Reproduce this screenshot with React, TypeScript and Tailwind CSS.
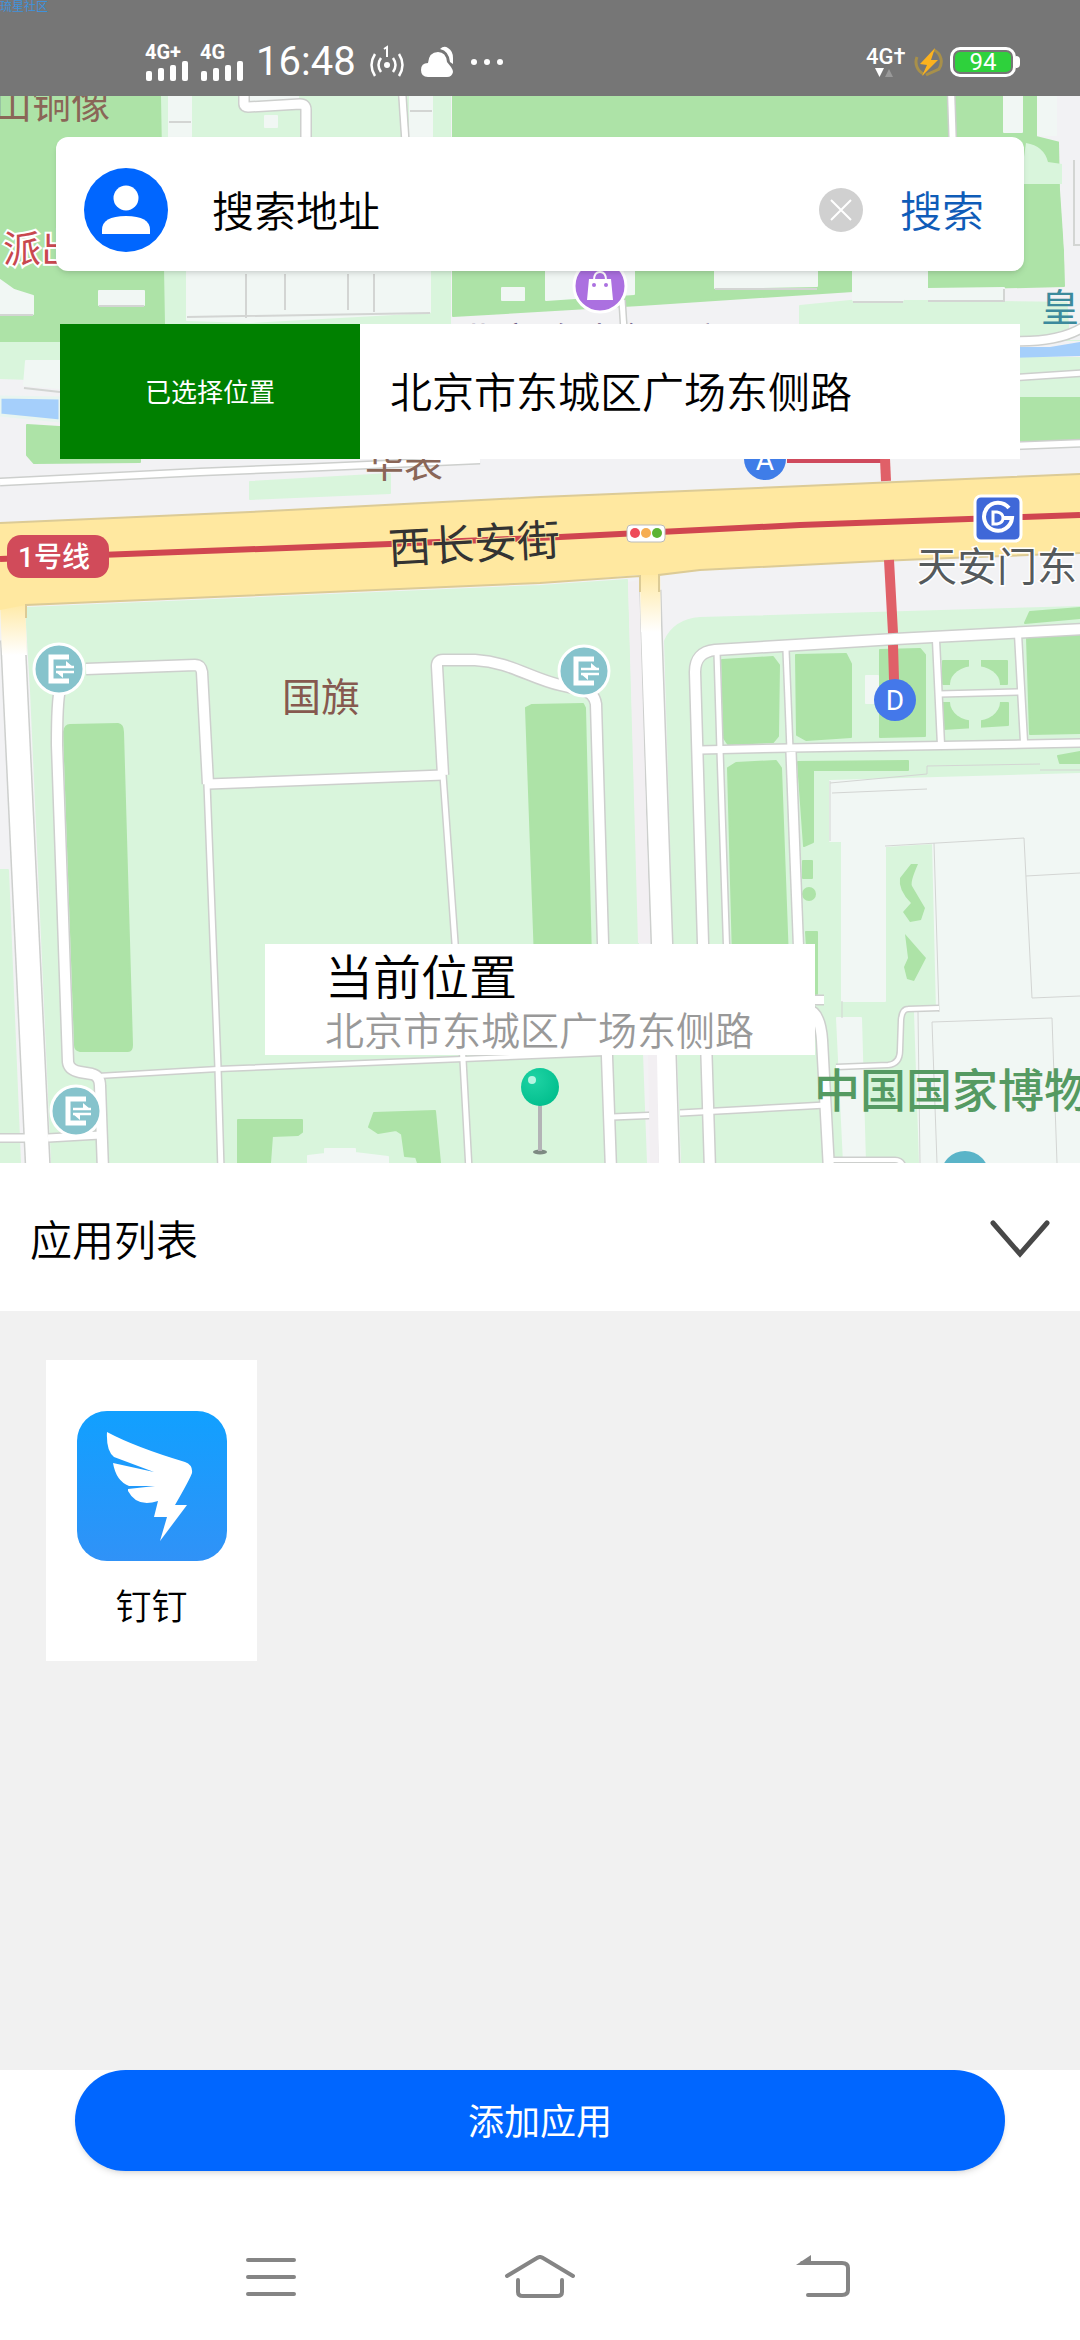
import { useState } from 'react'

const CJK = "font-['Roboto','Noto_Sans_CJK_SC',sans-serif]"

const LAWN = '#d9f5dc'
const GRASS = '#ade3a7'
const BUILDING = '#f1f7f4'
const CASING = '#cdcfcd'

const apps = [{ id: 'dingtalk', name: '钉钉' }]

const roads: { d: string; w: number }[] = [
  { d: 'M244 90V104Q244 107 248 107L300 104Q306 104 306 110V150', w: 9 },
  { d: 'M402 90L406 150', w: 6 },
  { d: 'M951 90L953 150', w: 6 },
  { d: 'M622 300L624 330', w: 5 },
  { d: 'M1010 341Q1060 343 1085 326', w: 8 },
  { d: 'M1010 378L1085 373', w: 5 },
  { d: 'M1010 446L1085 443', w: 6 },
  { d: 'M0 482L200 472L300 468L480 460', w: 6 },
  { d: 'M13 640L38 1170', w: 23 },
  { d: 'M86 669L195 665Q201 665 202 672L208 784', w: 10 },
  { d: 'M207 784L218 1068L221 1170', w: 5 },
  { d: 'M208 784L443 775', w: 9 },
  { d: 'M443 775L437 666Q437 660 443 660L475 660C510 662 530 678 560 685L582 690Q594 692 596 704L603 943L611 1170', w: 10 },
  { d: 'M443 775L455 943L463 1060L469 1170', w: 5 },
  { d: 'M60 690Q57 700 57 745L68 1062Q69 1070 80 1072L92 1074Q100 1076 100 1086L103 1170', w: 10 },
  { d: 'M98 1076L218 1069L463 1059L604 1053', w: 4 },
  { d: 'M-5 1138L26 1138M48 1138L100 1135', w: 7 },
  { d: 'M1085 629L895 639L715 650Q695 652 695 672L703 943L710 1170', w: 10 },
  { d: 'M717 652L720 750L727 960', w: 5 },
  { d: 'M700 750L790 748L1085 743', w: 7 },
  { d: 'M786 650L790 750', w: 5 },
  { d: 'M791 752L799 960', w: 9 },
  { d: 'M936 640L941 745M1018 634L1024 742', w: 6 },
  { d: 'M939 694L1021 692', w: 5 },
  { d: 'M808 1000L824 1000', w: 8 },
  { d: 'M808 1010Q820 1012 822 1040L829 1170', w: 10 },
  { d: 'M939 1008L908 1009Q902 1009 901 1020L900 1050Q900 1064 888 1065L836 1067', w: 4 },
  { d: 'M612 1117L660 1115M680 1113L826 1105', w: 5 },
  { d: 'M832 1160L895 1160Q902 1160 904 1168', w: 4 },
  { d: 'M650 590L651 625L662 943L669 1170', w: 20 },
]

function Blocks({ fill, shapes }: { fill: string; shapes: string[] }) {
  return (
    <g fill={fill} stroke={fill} strokeWidth="2" strokeLinejoin="round">
      {shapes.map((d) => (
        <path key={d} d={d} />
      ))}
    </g>
  )
}

function ExitMarker({ x, y }: { x: number; y: number }) {
  return (
    <g transform={`translate(${x} ${y})`}>
      <circle r="25" fill="#86c3cc" stroke="#fff" strokeWidth="3" />
      <path d="M10 -12H-8V12H10" fill="none" stroke="#fff" strokeWidth="5" />
      <path d="M-3 -2H15M-3 3H15" stroke="#fff" strokeWidth="2.5" />
      <path d="M7 -8L14 -2H7ZM4 9L-3 3H4Z" fill="#fff" />
    </g>
  )
}

function CityMap() {
  return (
    <svg
      viewBox="0 96 1080 1067"
      preserveAspectRatio="xMidYMin slice"
      className="absolute inset-0 h-full w-full"
      aria-hidden="true"
    >
      <defs>
        <linearGradient id="fade" x1="0" y1="0" x2="0" y2="1">
          <stop offset="0" stopColor="#ffe8a0" />
          <stop offset="1" stopColor="#fff" />
        </linearGradient>
        <radialGradient id="pin" cx="0.35" cy="0.3" r="0.8">
          <stop offset="0" stopColor="#1fd3a4" />
          <stop offset="1" stopColor="#00bd8c" />
        </radialGradient>
      </defs>
      <rect y="96" width="1080" height="1067" fill="#f2f2f4" />

      <Blocks
        fill={LAWN}
        shapes={[
          'M160 96H450V324H160Z',
          'M0 343H60V380L0 378Z',
          'M800 306L860 300L1080 303V340H800Z',
          'M1010 358H1080V400H1010Z',
          'M250 482L390 474V493L250 499Z',
          'M0 870L8 870L20 1163H0Z',
          'M26 608L540 586L627 580L638 943L646 1163H52L31 691Z',
          'M665 641Q674 620 700 618L1080 607V1163H682L674 943Z',
        ]}
      />
      <Blocks
        fill={GRASS}
        shapes={[
          'M0 96H160L164 324L62 341L0 341Z',
          'M453 96H1036V137L1060 143L1064 286L853 291L640 305L453 316Z',
          'M27 425L140 432V462L34 463L27 455Z',
          'M1010 398H1080V440H1010Z',
          'M64 732Q65 725 70 725L118 724Q123 725 123 732L132 1045Q132 1051 128 1051H80Q75 1050 75 1045Z',
          'M526 708L532 705L583 704L585 708L591 960H535Z',
          'M238 1120H302V1132L298 1135L272 1136L270 1163H238Z',
          'M374 1113L435 1111L440 1163H418L416 1157L405 1156L402 1134L396 1130L378 1133L369 1127Z',
          'M722 660L773 657L779 665L778 736L773 742L728 744L724 738Z',
          'M796 655L846 654L851 664V737L806 740L797 735Z',
          'M880 650L920 649L925 655V736L880 737Z',
          'M728 768L736 763L776 761L781 768L788 960H733Z',
          'M1027 638L1080 632V733L1030 734Z',
          'M1030 612L1080 608V618L1025 623Z',
          'M1058 756L1080 752V763H1060Z',
          'M798 762L908 761V770H813V842L804 846Z',
          'M803 861H812V878H803Z',
          'M806 932H817V994H810Z',
          'M943 661H1007V684H943Z',
          'M943 703H1008V725L943 729Z',
        ]}
      />
      <circle cx="809" cy="894" r="7" fill={GRASS} />
      <ellipse cx="975" cy="684" rx="25" ry="18" fill={LAWN} />
      <ellipse cx="975" cy="702" rx="25" ry="19" fill={LAWN} />
      <path d="M969 655H981V735H969Z" fill={LAWN} />
      <Blocks
        fill={BUILDING}
        shapes={[
          'M169 96H191V140H169Z',
          'M265 116H277V127H265Z',
          'M246 96H298V101H246Z',
          'M410 96H432V140H410Z',
          'M1004 96H1022V132H1004Z',
          'M1038 96H1056V135H1038Z',
          'M0 280L14 290L33 296V314H0Z',
          'M99 291H144V305H99Z',
          'M187 262H430V312L250 322L187 320Z',
          'M502 288H524V300H502Z',
          'M546 262H634V294L546 300Z',
          'M715 262H817V286L715 288Z',
          'M853 262H903V300H853Z',
          'M905 262H927V299H905Z',
          'M928 289L1004 288V299H928Z',
          'M26 361H60V388L24 385Z',
          'M325 1149H355V1153L388 1157V1163H308V1156L325 1154Z',
          'M866 676H878V703H866Z',
          'M830 781L1080 774V1163H920L915 1012H937L933 843L885 846V1001H842V841H830Z',
          'M837 1018H861L865 1163H844Z',
        ]}
      />
      <path d="M1058 96H1080V340H1070L1060 190Z" fill="#f2f2f4" />
      <path d="M1026 143Q1044 146 1048 162L1062 164V184H1020Z" fill={LAWN} />
      <g stroke="#d3d5d3" strokeWidth="2" fill="none">
        <path d="M169 122H191M410 111H432M246 274V318M374 274V312M285 274V310M348 274V310M1074 160V245H1080" />
        <path d="M187 317L430 313M99 306H144M0 315H33M24 388L60 392M853 302H903M928 301H1004V289M715 289H817" />
        <path d="M830 783L927 774L927 766L1040 764M830 781V841M832 793L927 789M1040 770H1080M885 846L1024 838L1032 998L1080 996M1026 876L1080 873M934 843L939 1012" strokeWidth="1" />
        <path d="M932 1022L1052 1018L1057 1163M932 1022L937 1163M918 1012L920 1163M842 1001V1018" strokeWidth="1" />
      </g>
      <g fill={GRASS}>
        <path d="M911 864H918Q910 882 912 886L925 908L921 920L910 922L903 912L911 903Q898 890 900 878Z" />
        <path d="M905 934L926 958L914 981L907 979L904 967L908 958Z" />
      </g>

      <path d="M0 397L60 398V421L0 415Z" fill="#a5cffb" stroke="#e8f5f0" strokeWidth="3" />
      <path d="M1010 347H1050L1080 342V356L1010 358Z" fill="#a5cffb" />

      <g fill="none" stroke={CASING} strokeLinejoin="round">
        {roads.map(({ d, w }) => (
          <path key={d} d={d} strokeWidth={w + 3} />
        ))}
      </g>
      <g fill="none" stroke="#fff" strokeLinejoin="round">
        {roads.map(({ d, w }) => (
          <path key={d} d={d} strokeWidth={w} />
        ))}
      </g>
      <path d="M648 1055H657L659 1163H650Z" fill="#f2eff2" />
      <path d="M628 582L639 580L650 943H638Z" fill="#f2eff2" />

      <path d="M0 600H25L27 655H2Z" fill="url(#fade)" />
      <path d="M640 570H660L661 632H641Z" fill="url(#fade)" />
      <path
        d="M0 523L250 512L540 497L780 487L1080 474V553L950 558L880 561L700 570L659 575H640L540 583L26 605L0 610Z"
        fill="#ffe8a0"
      />
      <path
        d="M0 523L250 512L540 497L780 487L1080 474M1080 553L950 558L880 561L700 570L659 575V592M640 592V576L540 583L26 605V618"
        fill="none"
        stroke="#dccb96"
        strokeWidth="2"
      />

      <g fill="none" stroke="#e06068">
        <path d="M787 461H885" strokeWidth="4" stroke="#cf4a5c" />
        <path d="M885 459L886 481" strokeWidth="10" />
        <path d="M889 560L893 633M893 645L894 680" strokeWidth="10" />
      </g>
      <path d="M0 559L100 555L390 544L560 537L800 525L1080 515" fill="none" stroke="#d04650" strokeWidth="6" />

      <rect x="7" y="535" width="102" height="43" rx="14" fill="#d14b5a" />
      <rect x="627" y="525" width="38" height="17" rx="4" fill="#fff" stroke="#bbb" />
      <circle cx="635" cy="533" r="5" fill="#ee4a58" />
      <circle cx="646" cy="533" r="5" fill="#f6ad52" />
      <circle cx="657" cy="533" r="5" fill="#5cb433" />

      <circle cx="600" cy="286" r="26" fill="#ab70e0" stroke="#fff" strokeWidth="3" />
      <path d="M589 279H611L613 300H587Z" fill="#fff" />
      <path d="M594 280Q594 272 600 272T606 280" fill="none" stroke="#fff" strokeWidth="2" />
      <circle cx="594" cy="285" r="2" fill="#ab70e0" />
      <circle cx="606" cy="285" r="2" fill="#ab70e0" />

      <rect x="975" y="496" width="46" height="45" rx="6" fill="#3f68d8" stroke="#fff" strokeWidth="3" />
      <path d="M1009 508A14 14 0 1 0 1012 518H1004" fill="none" stroke="#fff" strokeWidth="4" />
      <path d="M993 512H997Q1003 513 1003 518T997 524H993Z" fill="none" stroke="#fff" strokeWidth="3" />

      <circle cx="765" cy="459" r="21" fill="#3f7de8" />
      <circle cx="895" cy="700" r="21" fill="#4478ea" />
      <circle cx="965" cy="1175" r="24" fill="#5ab4c8" />

      <g className={CJK}>
        <text x="-7" y="118" fontSize="39" fill="#8a6657">山铜像</text>
        <text x="3" y="262" fontSize="38" fill="#c8484f" stroke="#fff" strokeWidth="4" paintOrder="stroke">派出所</text>
        <text x="1041" y="321" fontSize="38" fill="#3c8a9c">皇</text>
        <text x="460" y="355" fontSize="38" fill="#6c5a86">北京珍珠食品店</text>
        <text x="365" y="477" fontSize="39" fill="#8a6657">华表</text>
        <text x="389" y="564" fontSize="43" fill="#333" stroke="#ffe8a0" strokeWidth="2" paintOrder="stroke" transform="rotate(-3 389 564)">西长安街</text>
        <text x="18" y="567" fontSize="28" fill="#fff" fontWeight="500">1号线</text>
        <text x="917" y="581" fontSize="40" fill="#555a5c" stroke="#fff" strokeWidth="3" paintOrder="stroke">天安门东</text>
        <text x="282" y="711" fontSize="39" fill="#86594f">国旗</text>
        <text x="814" y="1107" fontSize="46" fill="#559a62" fontWeight="500">中国国家博物</text>
        <text x="765" y="470" fontSize="28" fill="#fff" textAnchor="middle">A</text>
        <text x="895" y="710" fontSize="28" fill="#fff" textAnchor="middle">D</text>
      </g>

      <ExitMarker x={59} y={669} />
      <ExitMarker x={584} y={671} />
      <ExitMarker x={76} y={1111} />

      <ellipse cx="540" cy="1152" rx="7" ry="2.5" fill="#7d8a82" />
      <path d="M540 1100V1151" stroke="#b3b3b6" strokeWidth="4" />
      <circle cx="540" cy="1087" r="19" fill="url(#pin)" />
      <circle cx="532" cy="1080" r="4" fill="#b6f5e2" />
    </svg>
  )
}

function Signal({ label }: { label: string }) {
  return (
    <div className="flex w-11 flex-col">
      <span className="text-[20px] font-bold leading-[18px]">{label}</span>
      <svg viewBox="0 0 44 20" className="h-5 w-11" fill="currentColor">
        <rect x="1" y="10" width="6" height="10" rx="2" />
        <rect x="13" y="7" width="6" height="13" rx="2" />
        <rect x="25" y="4" width="6" height="16" rx="2" />
        <rect x="37" y="0" width="6" height="20" rx="2" />
      </svg>
    </div>
  )
}

function StatusBar() {
  return (
    <div className="relative flex h-24 items-center bg-[#767676] pl-[145px] pr-[60px] pt-7 text-white">
      <span className="absolute left-0 top-0 text-[12px] leading-[14px] text-[#3f92dc]">琉星社区</span>
      <div className="flex items-center">
        <Signal label="4G+" />
        <div className="w-[11px]" />
        <Signal label="4G" />
        <time className="ml-3 w-[102px] text-[40px] leading-10">16:48</time>
        <svg viewBox="0 0 34 34" className="ml-3 h-[34px] w-[34px]" fill="none" stroke="currentColor" strokeWidth="2.5">
          <circle cx="17" cy="20" r="3" fill="currentColor" stroke="none" />
          <path d="M11 13Q6 20 11 27M23 13Q28 20 23 27M5 9Q-2 20 5 31M29 9Q36 20 29 31" />
          <path d="M14 4L17 2V12" strokeWidth="2" />
        </svg>
        <svg viewBox="0 0 34 32" className="ml-4 h-8 w-[34px]" fill="currentColor">
          <path d="M8 31Q1 31 1 24T8 17Q9 6 18 6Q26 6 27 16L31 21Q33 24 33 26Q32 31 27 31Z" />
          <path d="M20 3Q24 -1 28 2Q33 5 33 12V18L30 16Q29 5 20 3Z" />
        </svg>
        <svg viewBox="0 0 36 8" className="ml-4 h-2 w-9" fill="currentColor">
          <circle cx="4" cy="4" r="3" />
          <circle cx="17" cy="4" r="3" />
          <circle cx="30" cy="4" r="3" />
        </svg>
      </div>
      <div className="ml-auto flex items-center">
        <div className="w-[38px]">
          <span className="block text-[22px] font-medium leading-[22px]">4G†</span>
          <svg viewBox="0 0 38 10" className="h-2.5 w-[38px]">
            <path d="M9 0H18L13.5 9Z" fill="#fff" />
            <path d="M19 9H27L23 1Z" fill="#999" />
          </svg>
        </div>
        <svg viewBox="0 0 30 30" className="ml-2.5 h-[30px] w-[30px]">
          <path d="M20 3A13 13 0 0 1 25 22L12 28M10 27A13 13 0 0 1 3 10" fill="none" stroke="#a8904a" strokeWidth="3" />
          <path d="M21 1L6 17L13 18L8 29L24 13H17Z" fill="#fcb21e" />
        </svg>
        <div className="ml-1.5 flex items-center">
          <div className="rounded-[10px] border-[3px] border-white p-[2px]">
            <div className="flex h-5 w-14 items-center justify-center rounded-[5px] bg-[#2ed13c] text-[24px] leading-5">
              94
            </div>
          </div>
          <div className="h-3 w-1 rounded-r bg-white" />
        </div>
      </div>
    </div>
  )
}

function SearchBar() {
  const [query, setQuery] = useState('')

  return (
    <form
      className="flex h-[134px] items-center rounded-xl bg-white pl-7 pr-10 pt-3 shadow-md"
      onSubmit={(e) => e.preventDefault()}
    >
      <svg viewBox="0 0 84 84" className="h-[84px] w-[84px] shrink-0" aria-hidden="true">
        <circle cx="42" cy="42" r="42" fill="#0066ff" />
        <circle cx="42" cy="30" r="12.5" fill="#fff" />
        <path d="M18 66V62Q18 48 42 48T66 62V66Z" fill="#fff" />
      </svg>
      <input
        aria-label="搜索地址"
        placeholder="搜索地址"
        value={query}
        onChange={(e) => setQuery(e.target.value)}
        className="ml-11 min-w-0 flex-1 bg-transparent pt-1 text-[42px] font-[350] outline-none placeholder:text-black"
      />
      <button type="button" aria-label="清除" onClick={() => setQuery('')} className="shrink-0">
        <svg viewBox="0 0 44 44" className="h-11 w-11">
          <circle cx="22" cy="22" r="22" fill="#d0d0d0" />
          <path d="M12 12L32 32M32 12L12 32" stroke="#fff" strokeWidth="2" />
        </svg>
      </button>
      <button type="submit" className="ml-[37px] shrink-0 pt-1 text-[42px] font-[350] text-[#0f5cb8]">
        搜索
      </button>
    </form>
  )
}

function AppTile({ name }: { name: string }) {
  return (
    <button type="button" className="flex h-[301px] w-[211px] flex-col items-center bg-white pt-[51px]">
      <svg viewBox="0 0 150 150" className="h-[150px] w-[150px]" aria-hidden="true">
        <defs>
          <linearGradient id="tile" x1="0" y1="0" x2="0" y2="1">
            <stop offset="0" stopColor="#11a0ff" />
            <stop offset="1" stopColor="#3092f7" />
          </linearGradient>
        </defs>
        <rect width="150" height="150" rx="30" fill="url(#tile)" />
        <path
          d="M30 21Q58 36 108 51Q116 54 115 62Q113 68 98 94H110L83 130L90 106H77L81 90Q60 97 51 80V78L78 75H52Q39 70 36 52L77 61L37 46Q29 40 30 21Z"
          fill="#fff"
        />
      </svg>
      <span className="mt-5 text-[36px] font-[350] leading-[54px]">{name}</span>
    </button>
  )
}

function NavBar() {
  return (
    <nav className="grid h-[127px] grid-cols-3 place-items-center px-[136px] text-[#858585]">
      <button type="button" aria-label="菜单">
        <svg viewBox="0 0 50 44" className="h-11 w-[50px]" stroke="currentColor" strokeWidth="4" strokeLinecap="round">
          <path d="M2 5H48M2 22H48M2 39H48" />
        </svg>
      </button>
      <button type="button" aria-label="主页">
        <svg viewBox="0 0 72 44" className="h-11 w-[72px]" fill="none" stroke="currentColor" strokeWidth="4" strokeLinecap="round" strokeLinejoin="round">
          <path d="M3 21L33 3Q36 1 39 3L69 21M14 25V37Q14 41 19 41H53Q58 41 58 37V25" />
        </svg>
      </button>
      <button type="button" aria-label="返回">
        <svg viewBox="0 0 82 44" className="h-11 w-[82px]" fill="none" stroke="currentColor" strokeWidth="4" strokeLinecap="round">
          <path d="M34 8H74Q80 8 80 13V35Q80 40 74 40H40" />
          <path d="M43 0V10H28Z" fill="currentColor" stroke="none" />
        </svg>
      </button>
    </nav>
  )
}

export default function App() {
  const [open, setOpen] = useState(true)

  return (
    <div className={`flex min-h-screen flex-col bg-white text-black ${CJK}`}>
      <StatusBar />

      <section className="relative flex aspect-[1080/1067] flex-col overflow-hidden">
        <CityMap />
        <div className="relative px-14 pt-[41px]">
          <SearchBar />
        </div>
        <div className="relative mx-[60px] mt-[53px] flex h-[135px] items-center bg-white font-[350]">
          <span className="flex h-full w-[300px] shrink-0 items-center justify-center bg-[#008000] pt-1 text-[26px] font-normal text-white">
            已选择位置
          </span>
          <span className="pl-[30px] pt-1 text-[42px]">北京市东城区广场东侧路</span>
        </div>
        <div className="relative mx-auto mb-[108px] mt-auto h-[111px] w-[550px] bg-white pl-[60px] pt-2 font-[350]">
          <p className="text-[48px] leading-[54px]">当前位置</p>
          <p className="text-[39px] leading-[52px] text-[#999]">北京市东城区广场东侧路</p>
        </div>
      </section>

      <header className="flex h-[148px] items-center justify-between pl-[30px] pr-7 pt-1">
        <h2 className="pt-1 text-[42px] font-[350]">应用列表</h2>
        <button type="button" aria-label="收起列表" onClick={() => setOpen(!open)}>
          <svg viewBox="0 0 64 40" className="h-10 w-16" fill="none" stroke="#484848" strokeWidth="5" strokeLinecap="round">
            <path d="M5 4L32 35L59 4" />
          </svg>
        </button>
      </header>

      <main className="flex flex-1 flex-wrap content-start gap-8 bg-[#f1f1f1] pl-[46px] pt-[49px]">
        {open && apps.map((app) => <AppTile key={app.id} name={app.name} />)}
      </main>

      <footer className="px-[75px] pb-[42px]">
        <button
          type="button"
          className="h-[101px] w-full rounded-full bg-[#0066ff] pt-1 text-[36px] font-normal text-white shadow-md"
        >
          添加应用
        </button>
      </footer>
      <NavBar />
    </div>
  )
}
